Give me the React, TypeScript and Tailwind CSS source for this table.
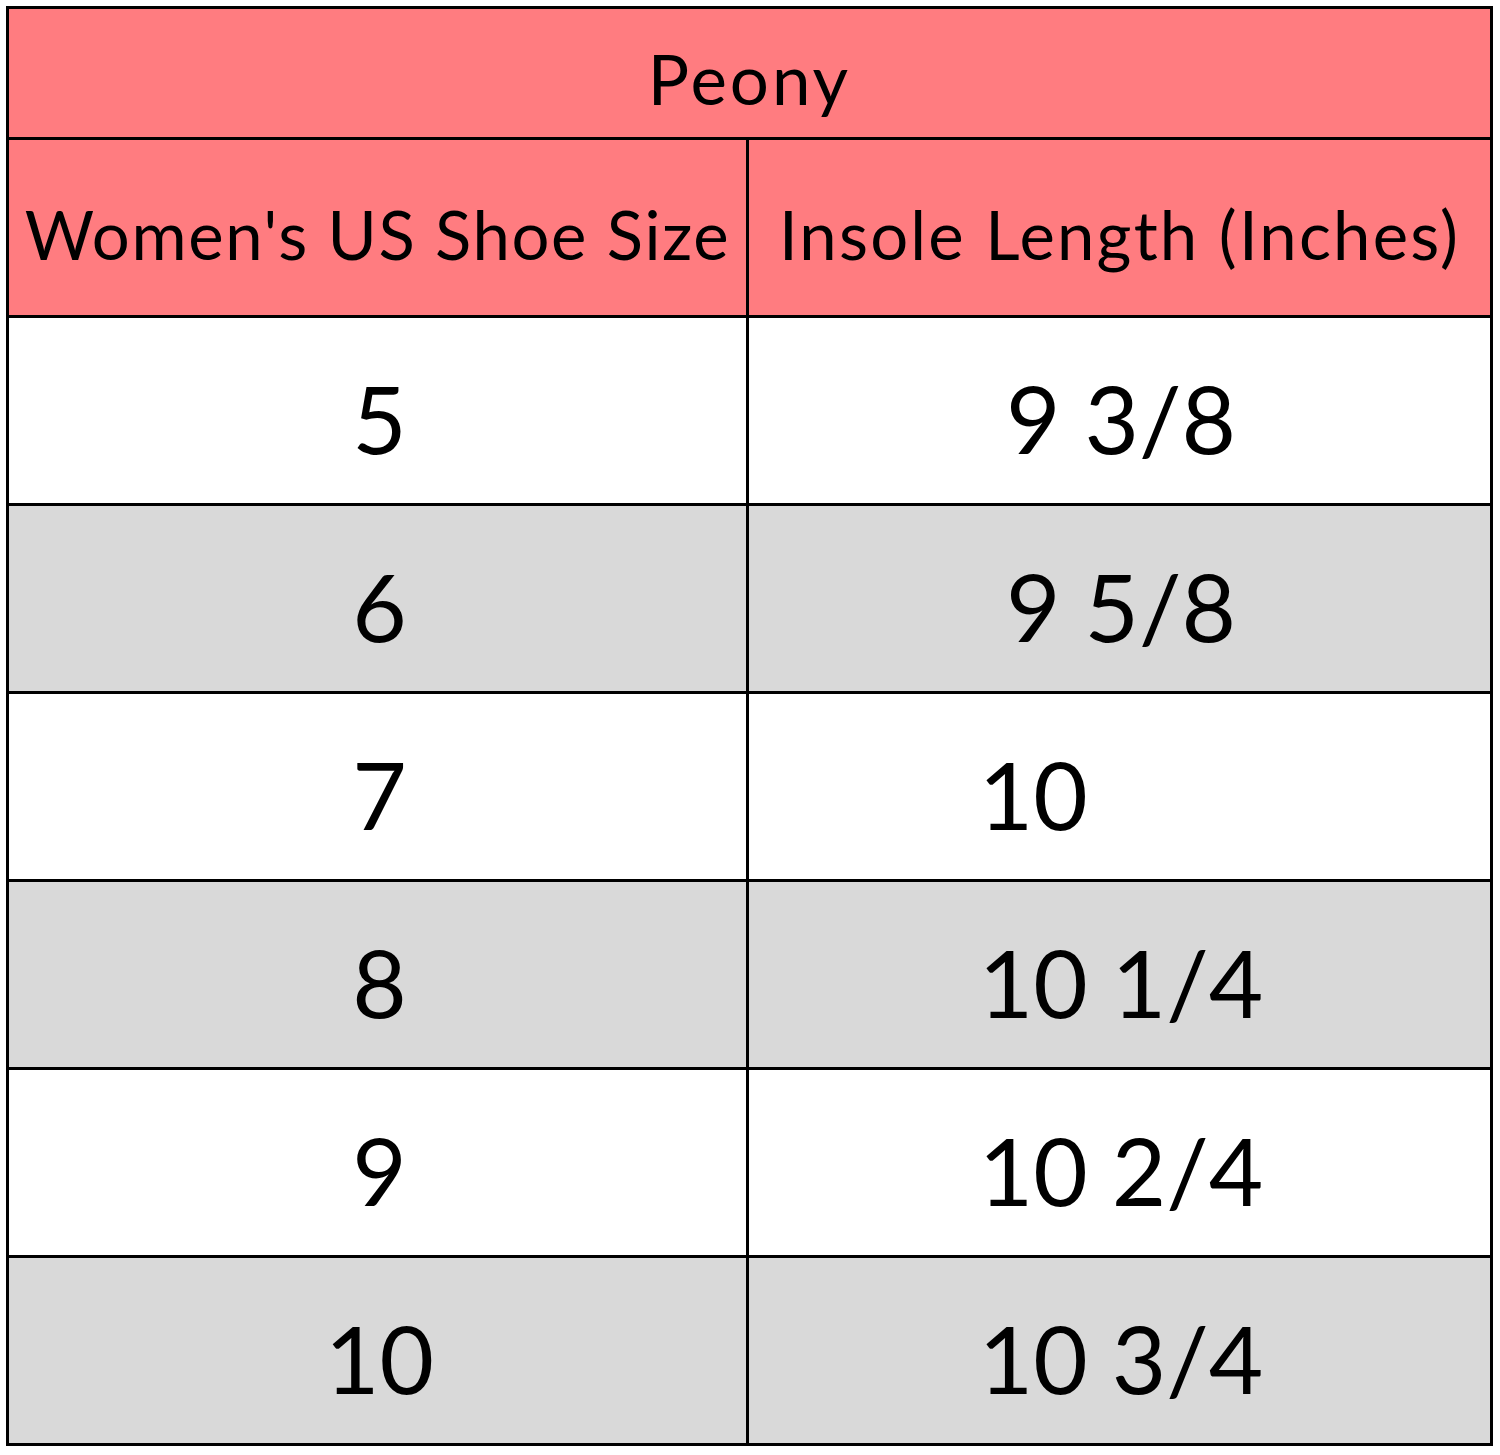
const rows = [
  { size: '5', length: '9 3/8' },
  { size: '6', length: '9 5/8' },
  { size: '7', length: '10', pad: ' 1/4' },
  { size: '8', length: '10 1/4' },
  { size: '9', length: '10 2/4' },
  { size: '10', length: '10 3/4' },
]

export default function App() {
  return (
    <div className="min-h-[1455px] w-[1500px] bg-white pl-[6px] pt-[6px] font-['Lato',sans-serif] text-black">
      <div className="w-[1487px] border-[3px] border-black">
        {/* Title */}
        <div className="flex h-[131px] items-center justify-center border-b-[3px] border-black bg-[#ff7c80] pt-[10px] text-[69px] leading-none tracking-[3px]">
          Peony
        </div>

        {/* Column headers */}
        <div className="grid grid-cols-[740px_1fr] border-b-[3px] border-black bg-[#ff7c80]">
          <div className="flex h-[175px] items-center justify-center border-r-[3px] border-black pt-[14px] text-[67px] leading-none tracking-[1.6px]">
            Women's US Shoe Size
          </div>
          <div className="flex h-[175px] items-center justify-center pt-[14px] text-[67px] leading-none tracking-[2.2px]">
            Insole Length (Inches)
          </div>
        </div>

        {rows.map((r, i) => (
          <div
            key={r.size}
            className={`grid grid-cols-[740px_1fr] ${i < rows.length - 1 ? 'border-b-[3px] border-black' : ''} ${i % 2 === 1 ? 'bg-[#d9d9d9]' : 'bg-white'}`}
          >
            <div className="flex h-[185px] items-center justify-center border-r-[3px] border-black pt-[14px] pl-[4px] text-[94px] leading-none">
              {r.size}
            </div>
            <div className="flex h-[185px] items-center justify-center pt-[14px] pl-[3px] text-[94px] leading-none">
              <span className="whitespace-pre">
                {r.length}
                {r.pad && <span className="invisible">{r.pad}</span>}
              </span>
            </div>
          </div>
        ))}
      </div>
    </div>
  )
}
